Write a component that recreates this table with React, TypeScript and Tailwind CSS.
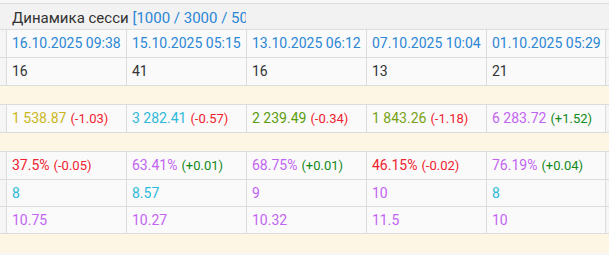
import React from "react";

type Val = { v: string; c: string; d?: string; dc?: string };

const dates = ["16.10.2025 09:38", "15.10.2025 05:15", "13.10.2025 06:12", "07.10.2025 10:04", "01.10.2025 05:29"];
const counts = ["16", "41", "16", "13", "21"];

const RED = "text-[#f0222f]";
const POS = "text-[#13891a]";
const PURPLE = "text-[#c264f2]";
const CYAN = "text-[#2eb9d9]";

const values: Val[] = [
  { v: "1 538.87", c: "text-[#cbb71c]", d: "(-1.03)", dc: RED },
  { v: "3 282.41", c: CYAN, d: "(-0.57)", dc: RED },
  { v: "2 239.49", c: "text-[#5a9c10]", d: "(-0.34)", dc: RED },
  { v: "1 843.26", c: "text-[#78a216]", d: "(-1.18)", dc: RED },
  { v: "6 283.72", c: PURPLE, d: "(+1.52)", dc: POS },
];

const pcts: Val[] = [
  { v: "37.5%", c: RED, d: "(-0.05)", dc: RED },
  { v: "63.41%", c: PURPLE, d: "(+0.01)", dc: POS },
  { v: "68.75%", c: PURPLE, d: "(+0.01)", dc: POS },
  { v: "46.15%", c: RED, d: "(-0.02)", dc: RED },
  { v: "76.19%", c: PURPLE, d: "(+0.04)", dc: POS },
];

const avg: Val[] = [
  { v: "8", c: CYAN },
  { v: "8.57", c: CYAN },
  { v: "9", c: PURPLE },
  { v: "10", c: PURPLE },
  { v: "8", c: CYAN },
];

const avg2: Val[] = ["10.75", "10.27", "10.32", "11.5", "10"].map((v) => ({ v, c: PURPLE }));

function Row({ cells, h = "h-[27px]" }: { cells: Val[]; h?: string }) {
  return (
    <div className={`flex border-t border-[#dcdcdc] ${h} bg-[#f5f5f5]`}>
      <div className="w-[6px] shrink-0" />
      {cells.map((c, i) => (
        <div
          key={i}
          className={`w-[120px] shrink-0 flex items-center border-l border-[#dcdcdc] bg-[#fafafa] pl-[5px] whitespace-nowrap ${
            i === cells.length - 1 ? "border-r" : ""
          }`}
        >
          <span className={`text-[14px] ${c.c}`}>{c.v}</span>
          {c.d && <span className={`ml-[4px] text-[13px] ${c.dc}`}>{c.d}</span>}
        </div>
      ))}
    </div>
  );
}

function Spacer() {
  return <div className="h-[19px] border-t border-[#dcdcdc] bg-[#fdf6e4]" />;
}

export default function App() {
  return (
    <div
      className="w-[609px] h-[255px] overflow-hidden bg-[#f7f7f7] pt-[3px]"
      style={{ fontFamily: "Roboto, 'Noto Sans', sans-serif" }}
    >
      <div className="flex h-[26px] border-t border-[#dcdcdc] bg-[#f2f2f2]">
        <div className="w-[6px] shrink-0" />
        <div className="w-[240px] shrink-0 overflow-hidden whitespace-nowrap pl-[6px] pt-[4px] text-[15px] leading-[20px]">
          <span className="text-[#333]">Динамика сесси</span>{" "}
          <span className="text-[#2b86d6]">[1000 / 3000 / 5000]</span>
        </div>
      </div>
      <Row cells={dates.map((d) => ({ v: d, c: "text-[#2b86d6]" }))} h="h-[28px]" />
      <Row cells={counts.map((d) => ({ v: d, c: "text-[#333]" }))} h="h-[28px]" />
      <Spacer />
      <Row cells={values} h="h-[28px]" />
      <Spacer />
      <Row cells={pcts} h="h-[28px]" />
      <Row cells={avg} />
      <Row cells={avg2} />
      <div className="h-[20px] border-t border-[#dcdcdc] bg-[#fdf6e4]" />
    </div>
  );
}
